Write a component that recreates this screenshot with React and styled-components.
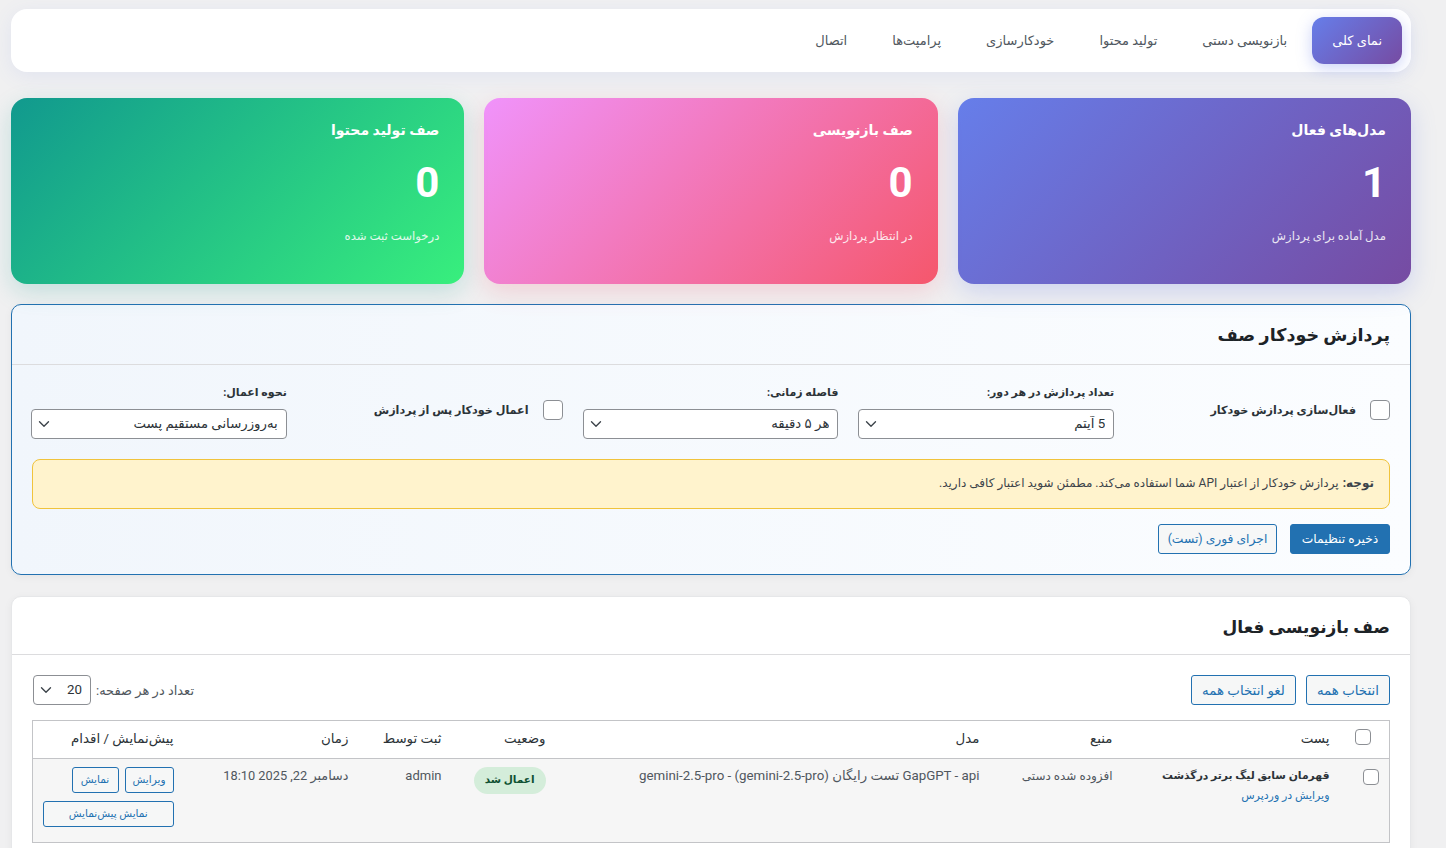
import React from 'react';
import styled, { createGlobalStyle } from 'styled-components';
import { ChevronDown } from 'lucide-react';

const GlobalStyle = createGlobalStyle`
  html, body {
    margin: 0;
    padding: 0;
    background: #f0f0f1;
    overflow: hidden;
  }
  body {
    font-family: Roboto, "DejaVu Sans", "Noto Sans", sans-serif;
    color: #3c434a;
    font-size: 13px;
  }
`;

const Page = styled.div`
  direction: rtl;
  width: 1400px;
  margin-left: 11px;
  padding-top: 9px;
`;

const Nav = styled.nav`
  display: flex;
  gap: 5px;
  height: 47px;
  padding: 8px 9px 8px 8px;
  margin-bottom: 26px;
  background: #fff;
  border-radius: 16px;
  box-shadow: 0 4px 20px rgba(102, 126, 234, 0.1);
`;

const NavItem = styled.a`
  display: flex;
  align-items: center;
  padding: 0 20px;
  font-size: 13px;
  border-radius: 12px;
  color: ${(p) => (p.$active ? '#fff' : '#50575e')};
  background: ${(p) => (p.$active ? 'linear-gradient(135deg, #667eea, #764ba2)' : 'transparent')};
  box-shadow: ${(p) => (p.$active ? '0 4px 15px rgba(102, 126, 234, 0.35)' : 'none')};
`;

const Stats = styled.div`
  display: grid;
  grid-template-columns: repeat(3, 1fr);
  gap: 20px;
  margin-bottom: 20px;
`;

const StatCard = styled.div`
  height: 186px;
  box-sizing: border-box;
  padding: 22px 25px;
  border-radius: 16px;
  color: #fff;
  background: ${(p) => p.$bg};
  box-shadow: 0 8px 24px ${(p) => p.$shadow};
`;

const StatTitle = styled.div`
  font-size: 14px;
  font-weight: 700;
  line-height: 20px;
`;

const StatValue = styled.div`
  font-size: 42px;
  font-weight: 700;
  line-height: 50px;
  margin-top: 18px;
`;

const StatNote = styled.div`
  font-size: 11.7px;
  line-height: 18px;
  margin-top: 19px;
  opacity: 0.85;
`;

const Panel = styled.section`
  border-radius: 10px;
  margin-bottom: 21px;
  border: 1px solid ${(p) => (p.$accent ? '#2271b1' : '#e6e7e9')};
  background: ${(p) => (p.$accent ? 'linear-gradient(to left, #fbfdff, #f1f6fc)' : '#fff')};
  box-shadow: 0 2px 8px rgba(0, 0, 0, 0.05);
`;

const PanelHeader = styled.header`
  height: ${(p) => (p.$accent ? '60px' : '58px')};
  box-sizing: border-box;
  display: flex;
  align-items: center;
  padding: ${(p) => (p.$accent ? '0 20px' : '3px 20px 0')};
  border-bottom: 1px solid #dcdcde;
`;

const PanelTitle = styled.h2`
  margin: 0;
  font-size: ${(p) => p.$size || '17.5px'};
  font-weight: 700;
  color: #1d2327;
`;

const PanelBody = styled.div`
  padding: 20px;
`;

const FieldGrid = styled.div`
  display: grid;
  grid-template-columns: repeat(5, 1fr);
  gap: 20px;
  align-items: center;
  margin: 0 0 20px -1px;
`;

const Field = styled.div`
  display: flex;
  flex-direction: column;
  gap: 8px;
`;

const FieldLabel = styled.label`
  font-size: 11px;
  font-weight: 700;
  line-height: 16px;
  color: #2c3338;
`;

const CheckField = styled.label`
  display: flex;
  align-items: center;
  gap: 14px;
  margin-bottom: 4px;
  font-size: 11.2px;
  font-weight: 700;
  color: #2c3338;
`;

const Check = styled.input.attrs({ type: 'checkbox' })`
  appearance: none;
  flex: none;
  display: block;
  width: ${(p) => p.$size || '20px'};
  height: ${(p) => p.$size || '20px'};
  margin: 0;
  background: #fff;
  border: 1px solid #8c8f94;
  border-radius: 4px;
`;

const SelectWrap = styled.div`
  position: relative;
  width: ${(p) => p.$width || 'auto'};
  height: 30px;
`;

const Select = styled.select`
  appearance: none;
  width: 100%;
  height: 100%;
  box-sizing: border-box;
  padding: 0 8px 2px 24px;
  font: inherit;
  font-size: 13.3px;
  color: #2c3338;
  background: #fff;
  border: 1px solid #8c8f94;
  border-radius: 4px;
`;

const SelectIcon = styled(ChevronDown)`
  position: absolute;
  left: 4px;
  top: 6px;
  color: #3c434a;
`;

const Notice = styled.div`
  height: 50px;
  box-sizing: border-box;
  display: flex;
  align-items: center;
  gap: 4px;
  padding: 0 15px 2px;
  margin-bottom: 15px;
  font-size: 12px;
  color: #3c434a;
  background: #fff3cd;
  border: 1px solid #f0c33c;
  border-radius: 8px;
`;

const Actions = styled.div`
  display: flex;
  gap: 13px;
`;

const Button = styled.button`
  height: ${(p) => (p.$small ? '26px' : '30px')};
  width: ${(p) => p.$width || 'auto'};
  padding: 0 ${(p) => (p.$small || p.$width ? '0' : '10px')};
  box-sizing: border-box;
  font: inherit;
  font-size: ${(p) => (p.$small ? '10.5px' : p.$size || '12.3px')};
  white-space: nowrap;
  border-radius: 3px;
  border: 1px solid #2271b1;
  color: ${(p) => (p.$primary ? '#fff' : '#2271b1')};
  background: ${(p) => (p.$primary ? '#2271b1' : '#f6f7f7')};
`;

const Toolbar = styled.div`
  display: flex;
  justify-content: space-between;
  align-items: center;
  margin-bottom: 15px;
`;

const ButtonGroup = styled.div`
  display: flex;
  flex-wrap: wrap;
  gap: ${(p) => p.$gap || '10px'};
`;

const PerPage = styled.div`
  display: flex;
  align-items: center;
  gap: 5px;
  font-size: 13px;
  color: #50575e;
  margin-left: 1px;
`;

const Table = styled.table`
  width: 1357px;
  table-layout: fixed;
  border-collapse: collapse;
  border: 1px solid #c3c4c7;
`;

const HeadCell = styled.th`
  height: 38px;
  box-sizing: border-box;
  padding: 0 ${(p) => (p.$check ? '18px' : '10px')} 2px 10px;
  text-align: right;
  font-size: 13.4px;
  font-weight: 400;
  color: #2c3338;
  border-bottom: 1px solid #c3c4c7;
`;

const HeadCheck = styled(Check)`
  margin-bottom: 4px;
`;

const Cell = styled.td`
  height: 84px;
  box-sizing: border-box;
  padding: 8px 10px;
  vertical-align: top;
  text-align: right;
  font-size: ${(p) => p.$size || '12px'};
  line-height: 18px;
  color: #50575e;
  background: #f6f6f6;
`;

const RowCheck = styled(Check)`
  margin-top: 2px;
`;

const PostTitle = styled.div`
  font-size: 10.8px;
  font-weight: 700;
  color: #2c3338;
`;

const PostLink = styled.a`
  display: block;
  margin-top: 2px;
  font-size: 11px;
  color: #2271b1;
`;

const Badge = styled.span`
  display: inline-block;
  padding: 4px 11px 5px;
  font-size: 10.5px;
  font-weight: 700;
  color: #0f5132;
  background: #d4edda;
  border-radius: 14px;
`;

const columns = [
  { key: 'check', width: 50 },
  { key: 'post', width: 217, label: 'پست' },
  { key: 'source', width: 133, label: 'منبع' },
  { key: 'model', width: 434, label: 'مدل' },
  { key: 'status', width: 104, label: 'وضعیت' },
  { key: 'by', width: 93, label: 'ثبت توسط' },
  { key: 'time', width: 175, label: 'زمان' },
  { key: 'actions', width: 151, label: 'پیش‌نمایش / اقدام' },
];

const navItems = ['نمای کلی', 'بازنویسی دستی', 'تولید محتوا', 'خودکارسازی', 'پرامپت‌ها', 'اتصال'];

const stats = [
  {
    title: 'مدل‌های فعال',
    value: '1',
    note: 'مدل آماده برای پردازش',
    bg: 'linear-gradient(135deg, #667eea, #764ba2)',
    shadow: 'rgba(102, 126, 234, 0.25)',
  },
  {
    title: 'صف بازنویسی',
    value: '0',
    note: 'در انتظار پردازش',
    bg: 'linear-gradient(135deg, #f093fb, #f5576c)',
    shadow: 'rgba(245, 87, 108, 0.2)',
  },
  {
    title: 'صف تولید محتوا',
    value: '0',
    note: 'درخواست ثبت شده',
    bg: 'linear-gradient(135deg, #11998e, #38ef7d)',
    shadow: 'rgba(17, 153, 142, 0.2)',
  },
];

const FormSelect = ({ value, width }) => (
  <SelectWrap $width={width}>
    <Select defaultValue={value}>
      <option>{value}</option>
    </Select>
    <SelectIcon size={18} strokeWidth={1.8} />
  </SelectWrap>
);

const App = () => {
  return (
    <Page>
      <GlobalStyle />
      <Nav>
        {navItems.map((item, i) => (
          <NavItem key={item} $active={i === 0}>
            {item}
          </NavItem>
        ))}
      </Nav>

      <Stats>
        {stats.map((s) => (
          <StatCard key={s.title} $bg={s.bg} $shadow={s.shadow}>
            <StatTitle>{s.title}</StatTitle>
            <StatValue>{s.value}</StatValue>
            <StatNote>{s.note}</StatNote>
          </StatCard>
        ))}
      </Stats>

      <Panel $accent>
        <PanelHeader $accent>
          <PanelTitle>پردازش خودکار صف</PanelTitle>
        </PanelHeader>
        <PanelBody>
          <FieldGrid>
            <CheckField>
              <Check />
              فعال‌سازی پردازش خودکار
            </CheckField>
            <Field>
              <FieldLabel>تعداد پردازش در هر دور:</FieldLabel>
              <FormSelect value="5 آیتم" />
            </Field>
            <Field>
              <FieldLabel>فاصله زمانی:</FieldLabel>
              <FormSelect value="هر ۵ دقیقه" />
            </Field>
            <CheckField>
              <Check />
              اعمال خودکار پس از پردازش
            </CheckField>
            <Field>
              <FieldLabel>نحوه اعمال:</FieldLabel>
              <FormSelect value="به‌روزرسانی مستقیم پست" />
            </Field>
          </FieldGrid>
          <Notice>
            <strong>توجه:</strong>
            پردازش خودکار از اعتبار API شما استفاده می‌کند. مطمئن شوید اعتبار کافی دارید.
          </Notice>
          <Actions>
            <Button $primary $width="100px">ذخیره تنظیمات</Button>
            <Button $width="119px">اجرای فوری (تست)</Button>
          </Actions>
        </PanelBody>
      </Panel>

      <Panel>
        <PanelHeader>
          <PanelTitle $size="17px">صف بازنویسی فعال</PanelTitle>
        </PanelHeader>
        <PanelBody>
          <Toolbar>
            <ButtonGroup>
              <Button $size="13.4px">انتخاب همه</Button>
              <Button $size="13.4px">لغو انتخاب همه</Button>
            </ButtonGroup>
            <PerPage>
              تعداد در هر صفحه:
              <FormSelect value="20" width="58px" />
            </PerPage>
          </Toolbar>
          <Table>
            <colgroup>
              {columns.map((c) => (
                <col key={c.key} width={c.width} />
              ))}
            </colgroup>
            <thead>
              <tr>
                {columns.map((c) => (
                  <HeadCell key={c.key} $check={!c.label}>
                    {c.label || <HeadCheck $size="16px" />}
                  </HeadCell>
                ))}
              </tr>
            </thead>
            <tbody>
              <tr>
                <Cell>
                  <RowCheck $size="16px" />
                </Cell>
                <Cell>
                  <PostTitle>قهرمان سابق لیگ برتر درگذشت</PostTitle>
                  <PostLink>ویرایش در وردپرس</PostLink>
                </Cell>
                <Cell>افزوده شده دستی</Cell>
                <Cell $size="13.3px">GapGPT - api تست رایگان gemini-2.5-pro - (gemini-2.5-pro)</Cell>
                <Cell>
                  <Badge>اعمال شد</Badge>
                </Cell>
                <Cell $size="13px">admin</Cell>
                <Cell $size="12.8px">دسامبر 22, 2025 18:10</Cell>
                <Cell>
                  <ButtonGroup $gap="8px 6px">
                    <Button $small $width="49px">ویرایش</Button>
                    <Button $small $width="47px">نمایش</Button>
                    <Button $small $width="131px">نمایش پیش‌نمایش</Button>
                  </ButtonGroup>
                </Cell>
              </tr>
            </tbody>
          </Table>
        </PanelBody>
      </Panel>
    </Page>
  );
};

export default App;
